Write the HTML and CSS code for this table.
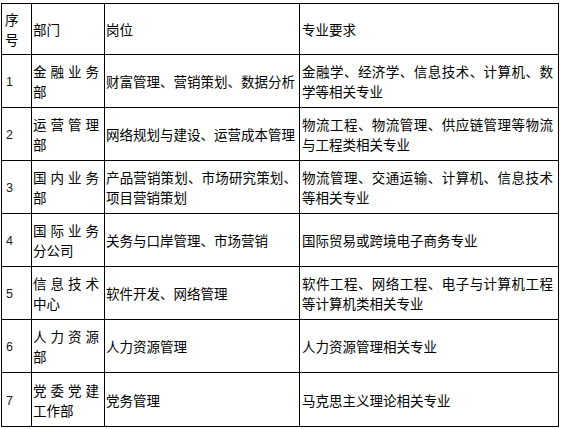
FILE: index.html
```html
<!DOCTYPE html>
<html lang="zh-CN">
<head>
<meta charset="utf-8">
<link rel="stylesheet" href="styles.css">
</head>
<body>
<table class="jobs">
  <colgroup>
    <col class="c-no">
    <col class="c-dept">
    <col class="c-post">
    <col class="c-req">
  </colgroup>
  <tr class="head">
    <td class="no">序号</td>
    <td class="dept">部门</td>
    <td class="post">岗位</td>
    <td class="req">专业要求</td>
  </tr>
  <tr>
    <td class="no"><span class="num">1</span></td>
    <td class="dept">金融业务部</td>
    <td class="post">财富管理、营销策划、数据分析</td>
    <td class="req">金融学、经济学、信息技术、计算机、数学等相关专业</td>
  </tr>
  <tr>
    <td class="no"><span class="num">2</span></td>
    <td class="dept">运营管理部</td>
    <td class="post">网络规划与建设、运营成本管理</td>
    <td class="req">物流工程、物流管理、供应链管理等物流与工程类相关专业</td>
  </tr>
  <tr>
    <td class="no"><span class="num">3</span></td>
    <td class="dept">国内业务部</td>
    <td class="post">产品营销策划、市场研究策划、项目营销策划</td>
    <td class="req">物流管理、交通运输、计算机、信息技术等相关专业</td>
  </tr>
  <tr>
    <td class="no"><span class="num">4</span></td>
    <td class="dept">国际业务分公司</td>
    <td class="post">关务与口岸管理、市场营销</td>
    <td class="req">国际贸易或跨境电子商务专业</td>
  </tr>
  <tr>
    <td class="no"><span class="num">5</span></td>
    <td class="dept">信息技术中心</td>
    <td class="post">软件开发、网络管理</td>
    <td class="req">软件工程、网络工程、电子与计算机工程等计算机类相关专业</td>
  </tr>
  <tr>
    <td class="no"><span class="num">6</span></td>
    <td class="dept">人力资源部</td>
    <td class="post">人力资源管理</td>
    <td class="req">人力资源管理相关专业</td>
  </tr>
  <tr class="last">
    <td class="no"><span class="num">7</span></td>
    <td class="dept">党委党建工作部</td>
    <td class="post">党务管理</td>
    <td class="req">马克思主义理论相关专业</td>
  </tr>
</table>
</body>
</html>
```

FILE: styles.css
```css
html, body {
  margin: 0;
  padding: 0;
  background: #ffffff;
}

body {
  padding: 3px 0 0 1px;
  font-family: "Noto Sans CJK SC", "Noto Sans", sans-serif;
  font-size: 13.5px;
  line-height: 20px;
  color: #000000;
}

.jobs {
  border-collapse: collapse;
  table-layout: fixed;
  width: 558px;
}

.c-no { width: 30px; }
.c-dept { width: 73px; }
.c-post { width: 195px; }
.c-req { width: 259px; }

.jobs td {
  border: 1px solid #000000;
  vertical-align: middle;
  text-align: justify;
  height: 52px;
  padding: 0 2px 0 1px;
  overflow: hidden;
}

.jobs tr.head td {
  height: 50px;
}

.jobs tr.last td {
  height: 53px;
}

.jobs td.no {
  padding: 0 5px 0 3px;
}

.jobs td.dept {
  padding: 0 5px 0 1px;
}

.jobs td.post {
  padding: 0 2px 0 1px;
}

.jobs td.req {
  padding: 0 5px 0 2px;
}

.num {
  font-family: "Liberation Sans", Arial, sans-serif;
  font-size: 12.5px;
  color: #1a1a1a;
  padding-left: 1px;
}
```
